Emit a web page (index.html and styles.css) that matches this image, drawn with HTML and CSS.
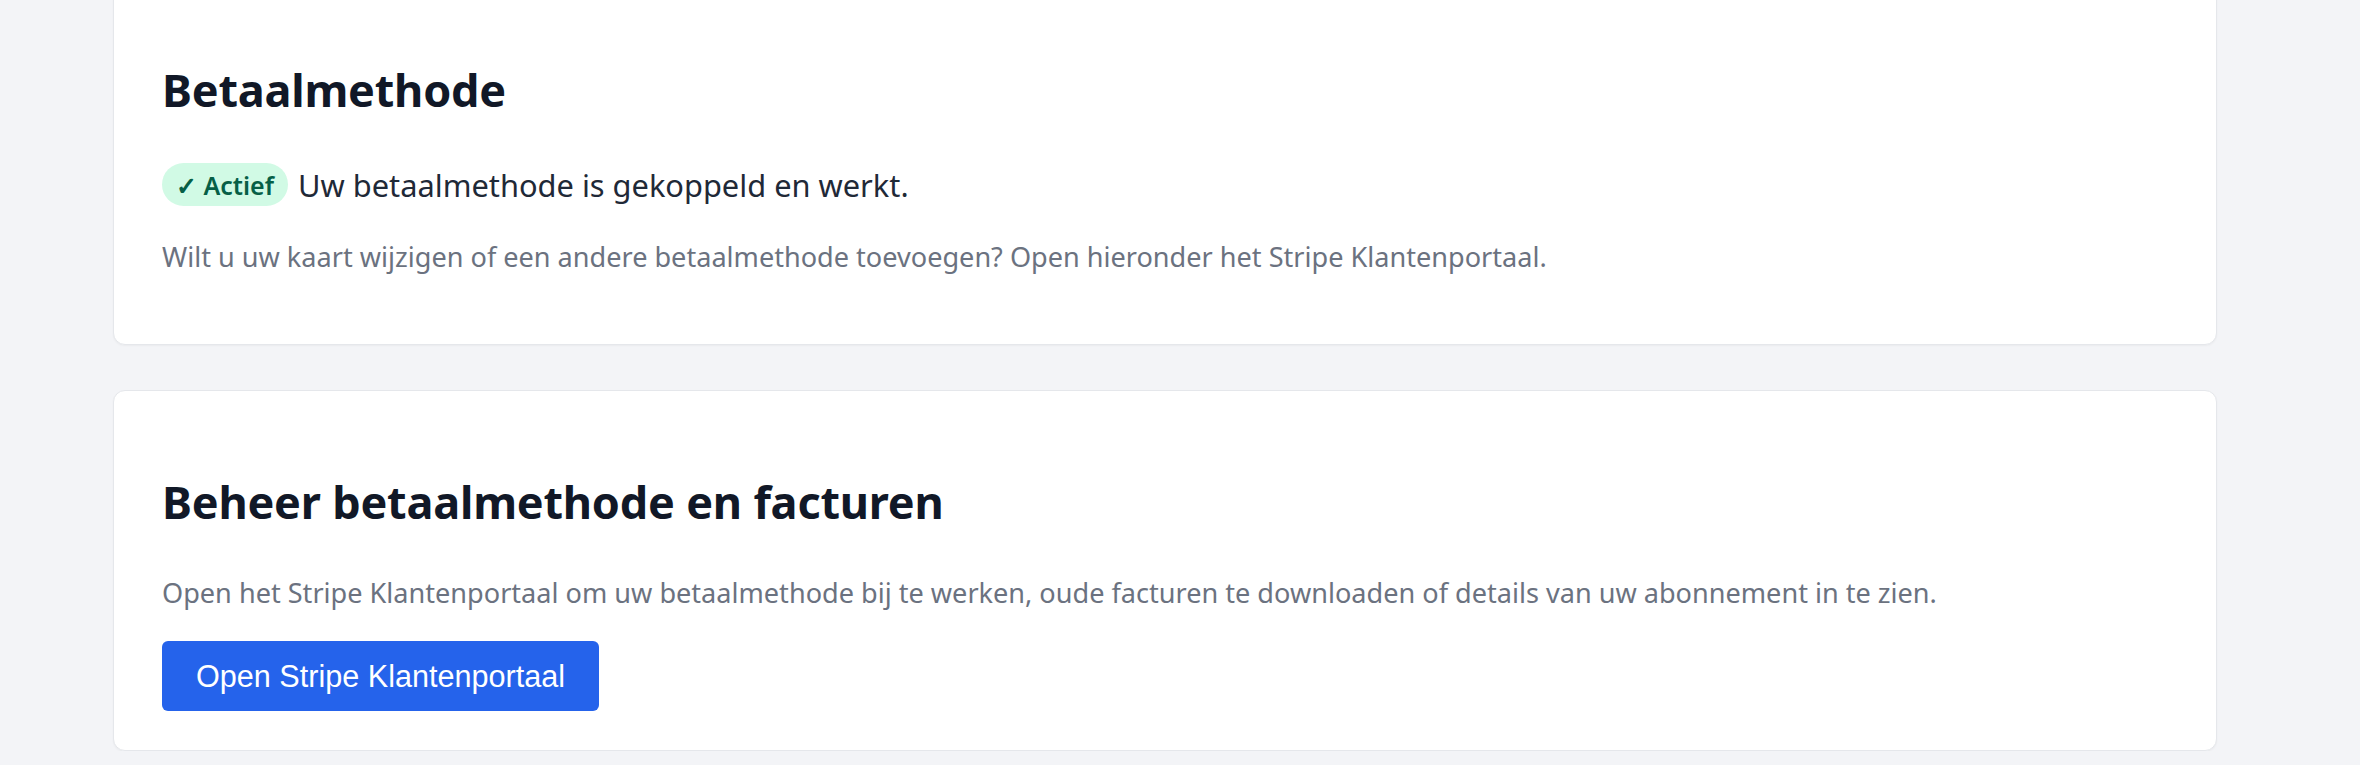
FILE: index.html
```html
<!DOCTYPE html>
<html lang="nl">
<head>
  <meta charset="UTF-8">
  <meta name="viewport" content="width=device-width, initial-scale=1">
  <title>Abonnement</title>
  <link rel="stylesheet" href="styles.css">
</head>
<body>
  <main class="page">
    <section class="card">
      <h2>Betaalmethode</h2>
      <div class="status">
        <span class="badge">✓ Actief</span>
        <span class="status-text">Uw betaalmethode is gekoppeld en werkt.</span>
      </div>
      <p class="muted">Wilt u uw kaart wijzigen of een andere betaalmethode toevoegen? Open hieronder het Stripe Klantenportaal.</p>
    </section>

    <section class="card">
      <h2>Beheer betaalmethode en facturen</h2>
      <p class="muted">Open het Stripe Klantenportaal om uw betaalmethode bij te werken, oude facturen te downloaden of details van uw abonnement in te zien.</p>
      <button type="button" class="portal-button">Open Stripe Klantenportaal</button>
    </section>
  </main>
</body>
</html>
```

FILE: styles.css
```css
* {
  box-sizing: border-box;
  margin: 0;
  padding: 0;
}

body {
  background: #f3f4f7;
  font-family: 'Noto Sans', 'Open Sans', sans-serif;
  color: #111827;
  overflow: hidden;
}

/* page is scrolled a little, first card starts above the fold */
.page {
  width: 2104px;
  margin: -22px 0 0 113px;
  display: flex;
  flex-direction: column;
  gap: 45px;
}

.card {
  background: #ffffff;
  border: 1px solid #e5e7eb;
  border-radius: 12px;
  box-shadow: 0 1px 2px rgba(0, 0, 0, 0.04);
  padding: 48px 48px 39px;
}

.card h2 {
  margin: 36px 0 46px;
  font-size: 45px;
  line-height: 54px;
  font-weight: 700;
  letter-spacing: -0.2px;
  color: #111827;
}

.status {
  display: flex;
  align-items: center;
  gap: 10px;
  height: 43px;
  margin-bottom: 33px;
}

.badge {
  display: inline-flex;
  align-items: center;
  height: 43px;
  padding: 0 14px;
  border-radius: 999px;
  background: #d1fae5;
  color: #065f46;
  font-size: 25px;
  font-weight: 600;
}

.status-text {
  font-size: 30.8px;
  color: #1f2937;
}

.muted {
  font-size: 27.1px;
  line-height: 36px;
  color: #6b7280;
  margin-bottom: 30px;
}

.portal-button {
  background-color: #2563eb;
  color: #fff;
  border: none;
  border-radius: 6px;
  padding: 12px 34px;
  font-family: 'Liberation Sans', Arial, sans-serif;
  font-size: 30.6px;
  line-height: 46px;
  cursor: pointer;
}

.portal-button:hover {
  background-color: #1d4ed8;
}
```
